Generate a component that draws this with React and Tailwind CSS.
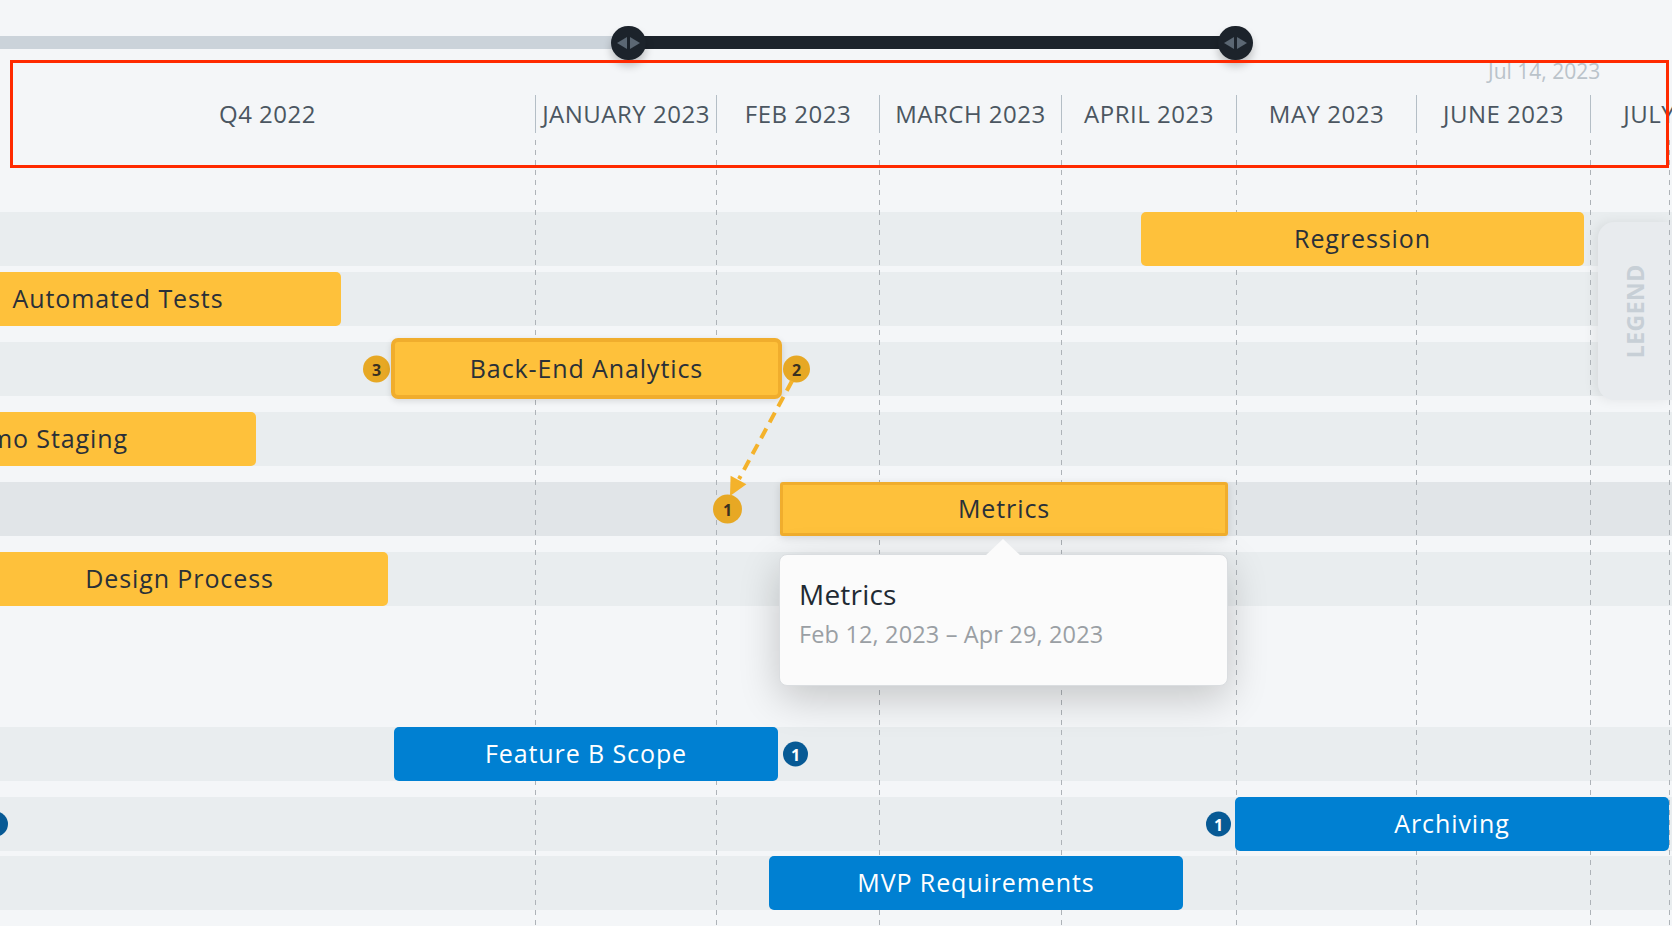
import React from 'react';

const MONTHS = [
  { label: 'Q4 2022', w: 'w-[535px]', first: true },
  { label: 'JANUARY 2023', w: 'w-[181px]' },
  { label: 'FEB 2023', w: 'w-[163px]' },
  { label: 'MARCH 2023', w: 'w-[182px]' },
  { label: 'APRIL 2023', w: 'w-[175px]' },
  { label: 'MAY 2023', w: 'w-[180px]' },
  { label: 'JUNE 2023', w: 'w-[174px]' },
  { label: 'JULY 2023', w: 'w-[181px]' },
];

const DASH = 'w-px shrink-0 h-full bg-[repeating-linear-gradient(to_bottom,#aeb3b8_0_5px,transparent_5px_10px)]';

function Handle({ pos }) {
  return (
    <div className={`absolute top-[-10px] ${pos} w-[35px] h-[34px] rounded-full bg-[#1c232b] flex items-center justify-center shadow-[0_6px_8px_rgba(0,0,0,0.22)]`}>
      <svg width="23" height="12" viewBox="0 0 23 12">
        <polygon points="0,6 10,0 10,12" fill="#5b6773" />
        <polygon points="13,0 23,6 13,12" fill="#5b6773" />
      </svg>
    </div>
  );
}

function Bar({ pos, label, tone = 'yellow', extra = '' }) {
  const tones = {
    yellow: 'bg-[#fec13b] text-[#2a3038]',
    blue: 'bg-[#0080d2] text-white',
  };
  return (
    <div className={`absolute z-[2] flex items-center justify-center whitespace-nowrap text-[25px] tracking-[0.9px] ${tones[tone]} ${pos} ${extra}`}>
      {label}
    </div>
  );
}

function Badge({ pos, n, tone = 'yellow', size = 'w-[27px] h-[27px]' }) {
  const tones = {
    yellow: 'bg-[#e7a824] text-[#3a3120]',
    blue: 'bg-[#075a95] text-white',
  };
  return (
    <div className={`absolute z-[2] top-1/2 -translate-y-1/2 ${pos} ${size} rounded-full flex items-center justify-center text-[16px] font-bold ${tones[tone]}`}>
      {n}
    </div>
  );
}

function Row({ mt, bg = 'bg-[#e9edef]', children }) {
  return <div className={`relative h-[54px] ${mt} ${bg}`}>{children}</div>;
}

export default function App() {
  return (
    <div className="relative w-[1672px] h-[926px] overflow-hidden bg-[#f4f6f8] font-['Open_Sans',sans-serif]">
      {/* range slider */}
      <div className="h-[60px] pt-[36px]">
        <div className="relative flex h-[13px]">
          <div className="w-[628px] bg-[#cbd3da]" />
          <div className="w-[607px] bg-[#1c232b]" />
          <Handle pos="left-[611px]" />
          <Handle pos="left-[1218px]" />
        </div>
      </div>

      {/* timeline header */}
      <div className="relative flex h-[108px]">
        {MONTHS.map(m => (
          <div key={m.label} className={`${m.w} shrink-0 h-full flex items-center`}>
            <div className={`flex-1 h-[38px] flex items-center justify-center whitespace-nowrap text-[24px] tracking-[0.5px] text-[#4b5661] ${m.first ? '' : 'border-l border-[#b4bec6]'}`}>
              {m.label}
            </div>
          </div>
        ))}
        <div className="absolute left-[1488px] top-[0px] text-[21px] leading-none pt-[1px] text-[#bac3ca] whitespace-nowrap">Jul 14, 2023</div>
      </div>

      {/* rows */}
      <div>
        <Row mt="mt-[44px]">
          <Bar pos="left-[1141px] w-[443px] top-0 h-full rounded-[5px]" label="Regression" />
        </Row>
        <Row mt="mt-[6px]">
          <Bar pos="left-[-105px] w-[446px] top-0 h-full rounded-[5px]" label="Automated Tests" />
        </Row>
        <Row mt="mt-[16px]">
          <Badge pos="left-[363px]" n="3" />
          <Bar pos="left-[391px] w-[391px] top-[-4px] h-[61px] rounded-[7px]" extra="border-[4px] border-[#f0ad2d] shadow-[0_2px_6px_rgba(0,0,0,0.12)]" label="Back-End Analytics" />
          <Badge pos="left-[783px]" n="2" />
        </Row>
        <Row mt="mt-[16px]">
          <Bar pos="left-[-173px] w-[429px] top-0 h-full rounded-[5px]" label="Demo Staging" />
        </Row>
        <Row mt="mt-[16px]" bg="bg-[#e1e5e8]">
          <Badge pos="left-[713px]" size="w-[29px] h-[29px]" n="1" />
          <Bar pos="left-[780px] w-[448px] top-0 h-full rounded-[3px]" extra="border-[3px] border-[#f0ad2d] shadow-[0_2px_8px_rgba(0,0,0,0.12)]" label="Metrics" />
        </Row>
        <Row mt="mt-[16px]">
          <Bar pos="left-[-29px] w-[417px] top-0 h-full rounded-[5px]" label="Design Process" />
        </Row>
        <Row mt="mt-[121px]">
          <Bar tone="blue" pos="left-[394px] w-[384px] top-0 h-full rounded-[5px]" label="Feature B Scope" />
          <Badge tone="blue" size="w-[25px] h-[25px]" pos="left-[783px]" n="1" />
        </Row>
        <Row mt="mt-[16px]">
          <Badge tone="blue" size="w-[25px] h-[25px]" pos="left-[-17px]" n="1" />
          <Badge tone="blue" size="w-[25px] h-[25px]" pos="left-[1206px]" n="1" />
          <Bar tone="blue" pos="left-[1235px] w-[434px] top-0 h-full rounded-[5px]" label="Archiving" />
        </Row>
        <Row mt="mt-[5px]">
          <Bar tone="blue" pos="left-[769px] w-[414px] top-0 h-full rounded-[5px]" label="MVP Requirements" />
        </Row>
      </div>

      {/* legend tab */}
      <div className="absolute z-[1] right-0 top-[222px] w-[74px] h-[178px] rounded-l-[16px] bg-[#e8ebee] shadow-[-4px_0_12px_rgba(0,0,0,0.07)] flex items-center justify-center">
        <span className="-rotate-90 text-[23px] font-bold tracking-[0.5px] text-[#c7cfd6]">LEGEND</span>
      </div>

      {/* grid lines */}
      <div className="absolute z-[1] left-0 top-[140px] bottom-0 flex pointer-events-none">
        <div className="w-[535px] shrink-0" />
        <div className={DASH} />
        <div className="w-[180px] shrink-0" />
        <div className={DASH} />
        <div className="w-[162px] shrink-0" />
        <div className={DASH} />
        <div className="w-[181px] shrink-0" />
        <div className={DASH} />
        <div className="w-[174px] shrink-0" />
        <div className={DASH} />
        <div className="w-[179px] shrink-0" />
        <div className={DASH} />
        <div className="w-[173px] shrink-0" />
        <div className={DASH} />
        <div className="w-[78px] shrink-0" />
        <div className={DASH} />
      </div>

      {/* dependency arrow */}
      <svg className="absolute z-[3] left-0 top-0 pointer-events-none" width="1672" height="926">
        <line x1="792" y1="381" x2="739" y2="479" stroke="#f4b22b" strokeWidth="4" strokeDasharray="11 7" />
        <polygon points="730,496 730.6,475.8 746.4,484.2" fill="#f4b22b" />
      </svg>

      {/* tooltip */}
      <div className="absolute z-[5] left-[779px] top-[554px] w-[449px] h-[132px] rounded-[8px] border border-[#dadde0] bg-[#fbfbfb] pl-[19px] pt-[25px] shadow-[0_12px_40px_rgba(0,0,0,0.2)]">
        <svg className="absolute left-[205px] top-[-17px]" width="36" height="18" viewBox="0 0 36 18">
          <polygon points="0,18 18,1 36,18" fill="#fbfbfb" />
        </svg>
        <div className="text-[28px] leading-none text-[#1f2a33] tracking-[0.2px]">Metrics</div>
        <div className="mt-[15px] text-[23.5px] leading-none tracking-[0.15px] text-[#9a9fa4]">Feb 12, 2023 – Apr 29, 2023</div>
      </div>

      {/* annotation box */}
      <div className="absolute z-[6] left-[10px] top-[60px] w-[1659px] h-[108px] border-[3px] border-[#ff2a00] pointer-events-none" />
    </div>
  );
}
